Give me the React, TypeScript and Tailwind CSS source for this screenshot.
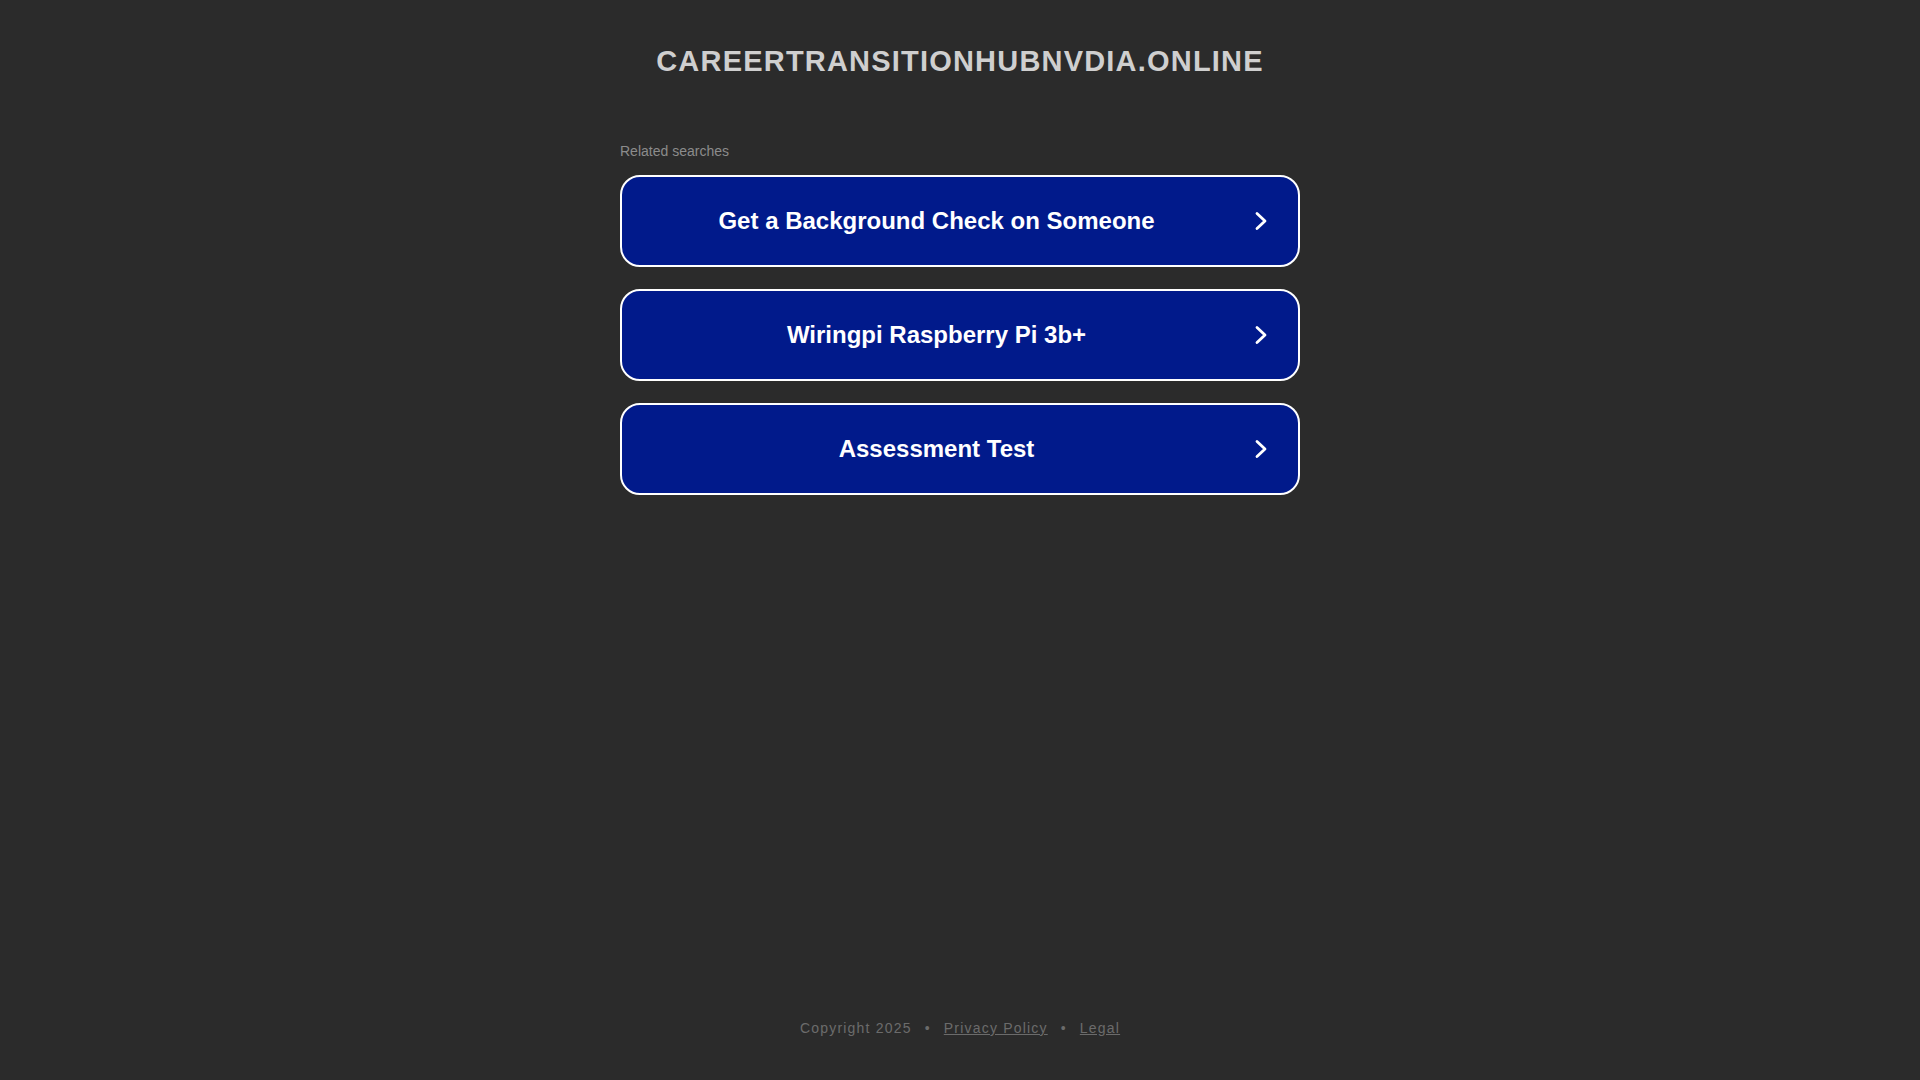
const searches = [
  'Get a Background Check on Someone',
  'Wiringpi Raspberry Pi 3b+',
  'Assessment Test',
];

function Chevron() {
  return (
    <svg
      viewBox="0 0 14 20"
      className="w-[14px] h-[20px] mr-[30px] ml-[9px] shrink-0"
      fill="none"
      stroke="currentColor"
      strokeWidth={2.8}
      strokeLinecap="round"
      strokeLinejoin="round"
    >
      <polyline points="3,2.5 11,10 3,17.5" />
    </svg>
  );
}

export default function App() {
  return (
    <div
      className="min-h-screen bg-[#2b2b2b] flex flex-col items-center"
      style={{ fontFamily: '"Liberation Sans", Arial, sans-serif' }}
    >
      {/* Domain title */}
      <h1 className="mt-[43px] text-[29px] leading-[36px] font-bold tracking-[1.2px] text-[#cfcfcf]">
        CAREERTRANSITIONHUBNVDIA.ONLINE
      </h1>

      {/* Related searches */}
      <div className="w-[680px] mt-[62px]">
        <p className="text-[14px] leading-[20px] text-[#8c8c8c] mb-[14px]">Related searches</p>
        <div className="flex flex-col gap-[22px]">
          {searches.map((s) => (
            <a
              key={s}
              href="#"
              className="flex items-center h-[92px] rounded-[20px] border-2 border-white bg-[#011a8b] text-white"
            >
              <span className="flex-1 pl-[6px] text-center text-[24px] font-bold">{s}</span>
              <Chevron />
            </a>
          ))}
        </div>
      </div>

      {/* Footer */}
      <footer className="mt-auto mb-[42px] text-[14px] leading-[20px] tracking-[1.2px] text-[#6b6b6b]">
        <span>Copyright 2025</span>
        <span className="mx-[13px]">•</span>
        <a href="#" className="underline">Privacy Policy</a>
        <span className="mx-[13px]">•</span>
        <a href="#" className="underline">Legal</a>
      </footer>
    </div>
  );
}
